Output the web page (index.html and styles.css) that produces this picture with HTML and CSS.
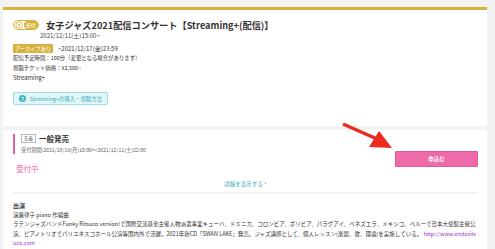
FILE: index.html
```html
<!DOCTYPE html>
<html lang="ja">
<head>
  <meta charset="UTF-8">
  <title>女子ジャズ2021配信コンサート</title>
  <link rel="stylesheet" href="styles.css">
</head>
<body>

  <div class="page">

    <section class="card event">
      <div class="title-row">
        <span class="live-badge">
          <svg width="8" height="8" viewBox="0 0 8 8"><circle cx="4" cy="4" r="3.2" fill="#fff" stroke="#d6b23c" stroke-width="0.9"/><path d="M3.2 2.4 L5.6 4 L3.2 5.6 Z" fill="#d6b23c"/></svg>
          <span class="live-text">配信</span>
        </span>
        <h1>女子ジャズ2021配信コンサート【Streaming+(配信)】</h1>
      </div>
      <p class="date">2021/12/11(土)15:00~</p>
      <div class="archive">
        <span class="archive-tag">アーカイブあり</span>
        <span>~2021/12/17(金)23:59</span>
      </div>
      <p class="info">配信予定時間：100分（変更となる場合があります）</p>
      <p class="info">視聴チケット価格：¥2,500~</p>
      <p class="info platform">Streaming+</p>
      <a class="howto" href="#">
        <svg width="7" height="7" viewBox="0 0 10 10"><circle cx="5" cy="5" r="5" fill="#3fb3c1"/><text x="5" y="8" font-size="8" font-family="Noto Sans" font-weight="700" text-anchor="middle" fill="#fff">?</text></svg>
        Streaming+の購入・視聴方法
      </a>
    </section>

    <section class="card sale">
      <svg class="pointer" width="60" height="34" viewBox="0 0 60 34">
        <line x1="5" y1="4" x2="39" y2="19" stroke="#ec2a1e" stroke-width="3.5"/>
        <polygon points="41,11 31,27 54,28" fill="#ec2a1e"/>
      </svg>

      <div class="sale-row">
        <div class="sale-main">
          <div class="sale-head">
            <div class="sale-title"><span class="tag">先着</span>一般発売</div>
            <p class="period">受付期間:2021/10/18(月)10:00～2021/12/11(土)22:00</p>
          </div>
          <p class="status">受付中</p>
        </div>
        <button class="apply">申込む</button>
      </div>

      <div class="more">詳細を表示する <span class="caret">^</span></div>

      <div class="cast">
        <p class="cast-label">出演</p>
        <p class="cast-name">遠藤律子 piano 作編曲</p>
        <p class="cast-text">ラテンジャズバンドFunky Ritsuco version!で国際交流基金主催人物派遣事業キューバ、ドミニカ、コロンビア、ボリビア、パラグアイ、ベネズエラ、メキシコ、ペルーで日本大使館主催公演、ピアノトリオでパリユネスコホール公演等国内外で活躍。2021年新CD「SWAN LAKE」発売。ジャズ講師として、個人レッスン(楽器、歌、理論)を実施している。 <a href="#">http://www.endoritsuco.com</a></p>
      </div>
    </section>

  </div>

</body>
</html>
```

FILE: styles.css
```css
body {
  margin: 0;
  background: #f2f2f2;
  font-family: "Noto Sans CJK JP", "Noto Sans", sans-serif;
  color: #333;
}
p {
  margin: 0;
}
.page {
  padding: 7px 8px 0 3px;
}
.card {
  background: #fff;
}

/* event card */
.event {
  border-top: 3px solid #d6b23c;
  padding: 9px 10px 19px;
}
.title-row {
  display: flex;
  align-items: center;
  gap: 7px;
  height: 12px;
}
.live-badge {
  display: inline-flex;
  align-items: center;
  height: 8px;
  border: 1px solid #d6b23c;
  border-radius: 5px;
  overflow: hidden;
  background: #fff;
}
.live-badge svg {
  display: block;
  margin: 0 1px 0 1px;
}
.live-text {
  background: #d6b23c;
  color: #fff;
  font-size: 5px;
  line-height: 8px;
  padding: 0 2px 0 2px;
  border-radius: 4px 0 0 4px;
}
h1 {
  margin: 0;
  font-size: 9.2px;
  font-weight: 700;
  line-height: 11px;
  color: #333;
}
.date {
  margin: 1px 0 0 27px;
  font-size: 6px;
  line-height: 8px;
  color: #444;
}
.archive {
  display: flex;
  align-items: center;
  gap: 5px;
  margin-top: 4px;
  font-size: 6px;
  color: #333;
}
.archive-tag {
  background: #d6b23c;
  color: #fff;
  font-size: 5.2px;
  line-height: 9px;
  width: 40px;
  padding-left: 2px;
  box-sizing: border-box;
  border-radius: 1px;
}
.info {
  font-size: 5.4px;
  line-height: 10px;
  color: #333;
}
.info:first-of-type {
  margin-top: 5px;
}
.platform {
  font-size: 6px;
}
.howto {
  display: inline-flex;
  align-items: center;
  gap: 4px;
  margin-top: 3px;
  height: 13px;
  box-sizing: border-box;
  padding: 0 5px 0 5px;
  background: #e2f6f8;
  border: 1px solid #9fdde5;
  border-radius: 2px;
  color: #3aaebb;
  font-size: 5.4px;
  text-decoration: none;
}

/* sale card */
.sale {
  position: relative;
  margin-top: 4px;
  padding: 4px 9px 20px 10px;
}
.pointer {
  position: absolute;
  left: 335px;
  top: -10px;
}
.sale-row {
  display: flex;
  justify-content: space-between;
  align-items: flex-start;
}
.sale-head {
  border-left: 2px solid #e8569c;
  padding-left: 6px;
}
.sale-title {
  display: flex;
  align-items: center;
  gap: 3px;
  height: 9px;
  font-size: 7.5px;
  font-weight: 700;
  color: #333;
}
.tag {
  font-size: 4.5px;
  font-weight: 400;
  line-height: 7px;
  padding: 0 2px;
  border: 1px solid #bbb;
  color: #555;
}
.period {
  margin-top: 3px;
  font-size: 5.2px;
  line-height: 8px;
  color: #666;
}
.status {
  margin: 10px 0 0 3px;
  font-size: 7.5px;
  line-height: 10px;
  color: #ef6aa8;
}
.apply {
  margin-top: 17px;
  width: 83px;
  height: 16px;
  background: #ef6aa8;
  border: 1px solid #e25a99;
  border-radius: 1px;
  color: #fff;
  font-family: inherit;
  font-size: 5.5px;
  font-weight: 700;
  padding: 0;
}
.more {
  margin-top: 6px;
  text-align: center;
  font-size: 5.5px;
  line-height: 8px;
  color: #45aebb;
  padding-bottom: 4px;
  border-bottom: 2px solid #f2f2f2;
}
.caret {
  font-size: 5px;
}
.cast {
  padding-top: 7px;
  font-size: 5.5px;
  line-height: 9.5px;
  color: #333;
}
.cast-label {
  font-size: 6px;
  font-weight: 700;
}
.cast-text {
  word-break: break-all;
}
.cast-text a {
  color: #9b2fd1;
  text-decoration: none;
}
```
